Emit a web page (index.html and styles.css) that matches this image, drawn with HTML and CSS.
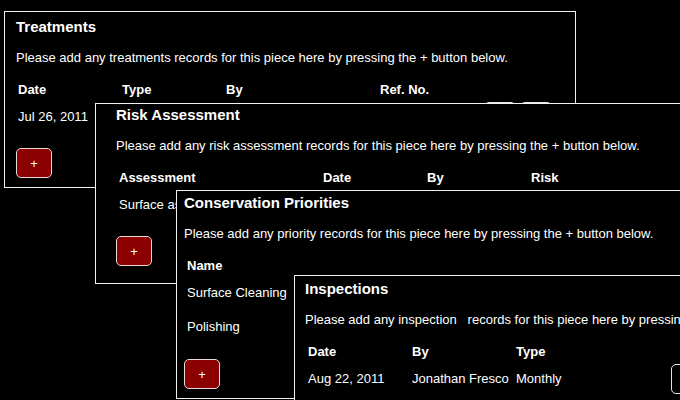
FILE: index.html
```html
<!DOCTYPE html>
<html lang="en">
<head>
<meta charset="utf-8">
<title>Piece records</title>
<link rel="stylesheet" href="styles.css">
</head>
<body>
<div class="desk">

  <section class="panel panel-treatments">
    <h2 class="panel-title">Treatments</h2>
    <p class="panel-desc">Please add any treatments records for this piece here by pressing the + button below.</p>
    <table class="records records-tight">
      <colgroup><col class="w104"><col class="w104"><col class="w154"><col class="w104"><col class="wact"></colgroup>
      <thead><tr><th>Date</th><th>Type</th><th>By</th><th>Ref. No.</th><th></th></tr></thead>
      <tbody>
        <tr><td>Jul 26, 2011</td><td></td><td></td><td></td><td><span class="row-btns"><span class="btn-outline"></span><span class="btn-outline"></span></span></td></tr>
      </tbody>
    </table>
    <button class="add-btn" type="button">+</button>
  </section>

  <section class="panel panel-risk">
    <h2 class="panel-title">Risk Assessment</h2>
    <p class="panel-desc">Please add any risk assessment records for this piece here by pressing the + button below.</p>
    <table class="records">
      <colgroup><col class="w204"><col class="w104"><col class="w104"><col class="w104"></colgroup>
      <thead><tr><th>Assessment</th><th>Date</th><th>By</th><th>Risk</th></tr></thead>
      <tbody>
        <tr><td>Surface assessment</td><td></td><td></td><td></td></tr>
      </tbody>
    </table>
    <button class="add-btn" type="button">+</button>
  </section>

  <section class="panel panel-priorities">
    <h2 class="panel-title">Conservation Priorities</h2>
    <p class="panel-desc">Please add any priority records for this piece here by pressing the + button below.</p>
    <table class="records">
      <colgroup><col class="w204"><col class="w104"></colgroup>
      <thead><tr><th>Name</th><th></th></tr></thead>
      <tbody>
        <tr><td>Surface Cleaning</td><td></td></tr>
        <tr><td>Polishing</td><td></td></tr>
      </tbody>
    </table>
    <button class="add-btn" type="button">+</button>
  </section>

  <section class="panel panel-inspections">
    <h2 class="panel-title">Inspections</h2>
    <p class="panel-desc">Please add any inspection&nbsp;&nbsp; records for this piece here by pressing the + button below.</p>
    <table class="records">
      <colgroup><col class="w104"><col class="w104"><col class="w155"><col class="wact"></colgroup>
      <thead><tr><th>Date</th><th>By</th><th>Type</th><th></th></tr></thead>
      <tbody>
        <tr><td>Aug 22, 2011</td><td>Jonathan Fresco</td><td>Monthly</td><td><span class="row-btns"><span class="btn-outline"></span><span class="btn-outline"></span></span></td></tr>
      </tbody>
    </table>
    <button class="add-btn" type="button">+</button>
  </section>

</div>
</body>
</html>
```

FILE: styles.css
```css
html, body {
  margin: 0;
  padding: 0;
  background: #000;
}

body {
  width: 680px;
  height: 400px;
  overflow: hidden;
  font-family: "Liberation Sans", Arial, sans-serif;
  color: #fff;
}

.desk {
  position: relative;
  width: 680px;
  height: 400px;
  overflow: hidden;
}

/* windows stacked on a free canvas */
.panel {
  position: absolute;
  box-sizing: border-box;
  background: #000;
  border: 1px solid #f2f2f2;
  display: flex;
  flex-direction: column;
  align-items: flex-start;
}

.panel-treatments {
  left: 4px;
  top: 11px;
  width: 572px;
  height: 177px;
  padding: 5px 11px 0 11px;
}

.panel-risk {
  left: 95px;
  top: 103px;
  width: 640px;
  height: 181px;
  padding: 1px 20px 0 20px;
}

.panel-priorities {
  left: 176px;
  top: 190px;
  width: 640px;
  height: 209px;
  padding: 2px 7px 0 7px;
}

.panel-inspections {
  left: 294px;
  top: 275px;
  width: 640px;
  height: 200px;
  padding: 3px 10px 0 10px;
}

.panel-title {
  margin: 0;
  font-size: 15px;
  font-weight: bold;
  line-height: 20px;
  white-space: nowrap;
}

.panel-desc {
  margin: 12px 0 0 0;
  font-size: 13px;
  line-height: 18px;
  white-space: nowrap;
}

.records {
  margin-top: 13px;
  border-collapse: collapse;
  border-spacing: 0;
  table-layout: fixed;
  font-size: 13px;
}

.records th,
.records td {
  padding: 0 0 0 3px;
  text-align: left;
  white-space: nowrap;
  overflow: hidden;
  vertical-align: middle;
}

.records-tight th,
.records-tight td {
  padding-left: 2px;
}

.records th {
  font-weight: bold;
  height: 20px;
  line-height: 20px;
}

.records td {
  height: 34px;
  line-height: 16px;
}

.w104 { width: 104px; }
.w154 { width: 154px; }
.w155 { width: 155px; }
.w204 { width: 204px; }
.wact { width: 60px; }

.row-btns {
  display: flex;
  gap: 4px;
}

.btn-outline {
  display: block;
  box-sizing: border-box;
  width: 32px;
  height: 30px;
  border: 1px solid #e6e6e6;
  border-radius: 5px;
  background: #000;
}

.add-btn {
  margin-top: 14px;
  box-sizing: border-box;
  width: 36px;
  height: 30px;
  padding: 0;
  border: 1px solid #e8d8d8;
  border-radius: 5px;
  background: #8b0000;
  color: #fff;
  font-family: "Liberation Sans", Arial, sans-serif;
  font-size: 13px;
  line-height: 1;
}

.panel-priorities .add-btn {
  margin-top: 15px;
}
```
